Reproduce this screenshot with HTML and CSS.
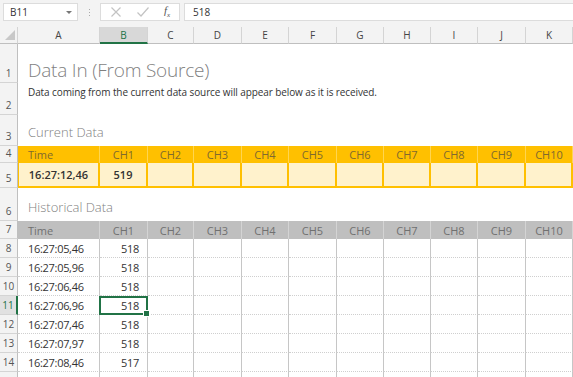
FILE: index.html
```html
<!DOCTYPE html>
<html lang="en">
<head>
    <meta charset="UTF-8">
    <title>Data In (From Source)</title>
    <link rel="stylesheet" href="styles.css">
</head>
<body>

    <div class="formula-bar">
        <div class="name-box">
            <span>B11</span>
            <span class="caret"></span>
        </div>
        <div class="grip"><i></i><i></i><i></i></div>
        <div class="fx-box">
            <svg width="12" height="12" viewBox="0 0 12 12"><path d="M1.5 1.5L10.5 10.5M10.5 1.5L1.5 10.5" stroke="#c3c3c3" stroke-width="1.2" fill="none"/></svg>
            <svg width="14" height="12" viewBox="0 0 14 12"><path d="M1.5 6.5L5 10L12.5 1.5" stroke="#c3c3c3" stroke-width="1.2" fill="none"/></svg>
            <span class="fx">f<sub>x</sub></span>
        </div>
        <div class="formula-input">518</div>
    </div>

    <div class="sheet">
        <!-- column headers -->
        <div class="corner"><svg width="10" height="10" viewBox="0 0 10 10"><path d="M10 0V10H0Z" fill="#c8c8c8"/></svg></div>
        <div class="col-head">A</div>
        <div class="col-head active">B</div>
        <div class="col-head">C</div>
        <div class="col-head">D</div>
        <div class="col-head">E</div>
        <div class="col-head">F</div>
        <div class="col-head">G</div>
        <div class="col-head">H</div>
        <div class="col-head">I</div>
        <div class="col-head">J</div>
        <div class="col-head">K</div>

        <!-- rows 1-3 -->
        <div class="row-head">1</div>
        <div class="wide title">Data In (From Source)</div>
        <div class="row-head">2</div>
        <div class="wide subtitle">Data coming from the current data source will appear below as it is received.</div>
        <div class="row-head">3</div>
        <div class="wide section">Current Data</div>

        <!-- current data table -->
        <div class="row-head">4</div>
        <div class="cur-head left">Time</div>
        <div class="cur-head">CH1</div>
        <div class="cur-head">CH2</div>
        <div class="cur-head">CH3</div>
        <div class="cur-head">CH4</div>
        <div class="cur-head">CH5</div>
        <div class="cur-head">CH6</div>
        <div class="cur-head">CH7</div>
        <div class="cur-head">CH8</div>
        <div class="cur-head">CH9</div>
        <div class="cur-head">CH10</div>

        <div class="row-head">5</div>
        <div class="cur-cell left">16:27:12,46</div>
        <div class="cur-cell">519</div>
        <div class="cur-cell"></div>
        <div class="cur-cell"></div>
        <div class="cur-cell"></div>
        <div class="cur-cell"></div>
        <div class="cur-cell"></div>
        <div class="cur-cell"></div>
        <div class="cur-cell"></div>
        <div class="cur-cell"></div>
        <div class="cur-cell"></div>

        <div class="row-head">6</div>
        <div class="wide section">Historical Data</div>

        <!-- historical table -->
        <div class="row-head">7</div>
        <div class="hist-head left">Time</div>
        <div class="hist-head">CH1</div>
        <div class="hist-head">CH2</div>
        <div class="hist-head">CH3</div>
        <div class="hist-head">CH4</div>
        <div class="hist-head">CH5</div>
        <div class="hist-head">CH6</div>
        <div class="hist-head">CH7</div>
        <div class="hist-head">CH8</div>
        <div class="hist-head">CH9</div>
        <div class="hist-head">CH10</div>
    </div>

    <script>
        var historyRows = [
            ['16:27:05,46', 518],
            ['16:27:05,96', 518],
            ['16:27:06,46', 518],
            ['16:27:06,96', 518],
            ['16:27:07,46', 518],
            ['16:27:07,97', 518],
            ['16:27:08,46', 517],
            ['', '']
        ];

        var sheet = document.querySelector('.sheet');

        for (var i = 0; i < historyRows.length; i++) {
            var rowNum = i + 8;
            var label = historyRows[i][0] ? rowNum : ''; // last row is cut off by the window
            var html = '<div class="row-head' + (rowNum === 11 ? ' active' : '') + '">' + label + '</div>';
            html += '<div class="cell left">' + historyRows[i][0] + '</div>';
            html += '<div class="cell num' + (rowNum === 11 ? ' selected' : '') + '">' + historyRows[i][1] + '</div>';
            for (var c = 0; c < 9; c++) {
                html += '<div class="cell"></div>';
            }
            sheet.insertAdjacentHTML('beforeend', html);
        }
    </script>

</body>
</html>
```

FILE: styles.css
```css
body {
    margin: 0;
    font-family: "Open Sans", "Noto Sans", sans-serif;
    color: #333;
    background: #fff;
    overflow: hidden;
    width: 573px;
    height: 377px;
}

.formula-bar {
    display: flex;
    align-items: center;
    height: 27px;
    padding: 0 0 3px 3px;
    box-sizing: border-box;
    background: #f3f3f3;
}

.name-box {
    display: flex;
    align-items: center;
    justify-content: space-between;
    width: 75px;
    height: 18px;
    padding: 0 5px 0 6px;
    box-sizing: border-box;
    background: #fff;
    border: 1px solid #dcdcdc;
    font-size: 10px;
}

.caret {
    width: 0;
    height: 0;
    border-left: 3px solid transparent;
    border-right: 3px solid transparent;
    border-top: 3px solid #777;
}

.grip {
    display: flex;
    flex-direction: column;
    gap: 2px;
    margin: 0 10px 0 11px;
}

.grip i {
    width: 1px;
    height: 1px;
    background: #aaa;
}

.fx-box {
    display: flex;
    align-items: center;
    gap: 14px;
    width: 80px;
    height: 18px;
    padding-left: 9px;
    box-sizing: border-box;
    background: #fff;
    border: 1px solid #dcdcdc;
}

.fx {
    font-family: "Liberation Serif", serif;
    font-style: italic;
    font-size: 11px;
    color: #555;
}

.fx sub {
    font-size: 7px;
}

.formula-input {
    flex: 1;
    height: 18px;
    margin-left: 4px;
    padding-left: 8px;
    box-sizing: border-box;
    background: #fff;
    border: 1px solid #dcdcdc;
    border-right: none;
    font-size: 10px;
    line-height: 16px;
}

.sheet {
    display: grid;
    grid-template-columns: 18px 82px 48px 46px 48px 47px 48px 47px 47px 47px 48px 47px;
    grid-template-rows: 17px 39px 32px 31px 17px 25px 33px 18px repeat(8, 19px);
    font-size: 11px;
}

.sheet > div {
    box-sizing: border-box;
    white-space: nowrap;
}

.corner {
    display: flex;
    align-items: flex-end;
    justify-content: flex-end;
    padding: 0 2px 3px 0;
    background: #f3f3f3;
    border-right: 1px solid #d4d4d4;
    border-bottom: 1px solid #bfbfbf;
}

.col-head {
    display: flex;
    align-items: center;
    justify-content: center;
    background: #f3f3f3;
    color: #444;
    font-size: 10px;
    border-right: 1px solid #d4d4d4;
    border-bottom: 1px solid #bfbfbf;
}

.col-head.active {
    background: #d8d8d8;
    color: #217346;
    border-bottom: 2px solid #217346;
}

.row-head {
    display: flex;
    align-items: flex-end;
    justify-content: center;
    padding-bottom: 2px;
    background: #f3f3f3;
    color: #555;
    font-size: 10px;
    border-right: 1px solid #bfbfbf;
    border-bottom: 1px solid #d4d4d4;
}

.row-head.active {
    background: #e1e1e1;
    color: #217346;
    border-right: 2px solid #217346;
}

.wide {
    grid-column: span 11;
    padding-left: 10px;
}

.title {
    display: flex;
    align-items: flex-end;
    padding-bottom: 0;
    font-size: 19px;
    font-weight: 300;
    letter-spacing: -0.2px;
    color: #7f7f7f;
}

.subtitle {
    padding-top: 2px;
    font-size: 10px;
    letter-spacing: -0.1px;
}

.section {
    display: flex;
    align-items: flex-end;
    padding-bottom: 5px;
    font-size: 13px;
    font-weight: 300;
    color: #7f7f7f;
}

.cur-head {
    display: flex;
    align-items: center;
    justify-content: center;
    background: #ffc000;
    color: #7f6a2e;
    border-right: 1px solid #ffd551;
}

.cur-head.left,
.hist-head.left,
.cell.left {
    justify-content: flex-start;
    padding-left: 10px;
}

.cur-cell {
    display: flex;
    align-items: center;
    justify-content: center;
    background: #fff2cc;
    font-weight: 600;
    border-right: 2px solid #ffc000;
    border-bottom: 2px solid #ffc000;
}

.cur-cell.left {
    border-left: 1px solid #ffc000;
}

.hist-head {
    display: flex;
    align-items: center;
    justify-content: center;
    background: #bfbfbf;
    color: #707070;
    border-right: 1px solid #d4d4d4;
}

.cell {
    display: flex;
    align-items: center;
    border-right: 1px solid #c6c6c6;
    border-bottom: 1px dotted #cfcfcf;
    font-size: 11px;
    letter-spacing: -0.3px;
}

.cell.num {
    justify-content: flex-end;
    padding-right: 8px;
}

.cell.selected {
    position: relative;
    border: 2px solid #217346;
    padding-right: 7px;
    margin-left: -1px;
}

.cell.selected::after {
    content: "";
    position: absolute;
    right: -4px;
    bottom: -4px;
    width: 5px;
    height: 5px;
    background: #217346;
    border: 1px solid #fff;
}
```
